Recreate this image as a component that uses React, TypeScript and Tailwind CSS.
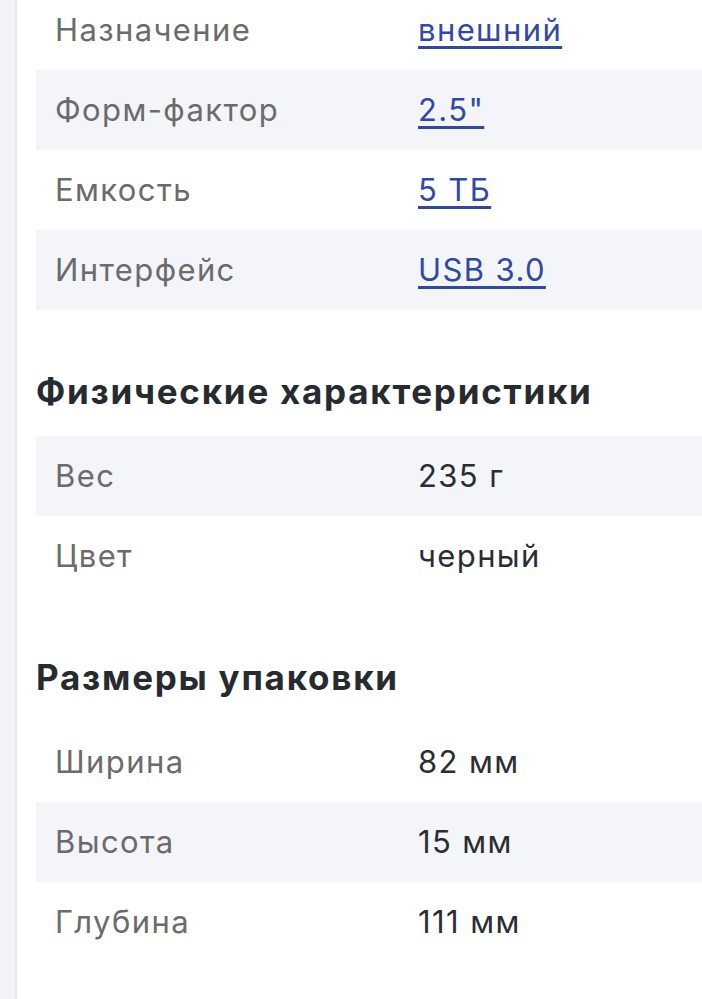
import React from "react";

type Row = { label: string; value: string; link?: boolean };

const general: Row[] = [
  { label: "Назначение", value: "внешний", link: true },
  { label: "Форм-фактор", value: "2.5\"", link: true },
  { label: "Емкость", value: "5 ТБ", link: true },
  { label: "Интерфейс", value: "USB 3.0", link: true },
];

const physical: Row[] = [
  { label: "Вес", value: "235 г" },
  { label: "Цвет", value: "черный" },
];

const pack: Row[] = [
  { label: "Ширина", value: "82 мм" },
  { label: "Высота", value: "15 мм" },
  { label: "Глубина", value: "111 мм" },
];

const SpecTable = ({ rows, firstGray }: { rows: Row[]; firstGray: boolean }) => (
  <div className="flex flex-col">
    {rows.map((r, i) => {
      const gray = firstGray ? i % 2 === 0 : i % 2 === 1;
      return (
        <div
          key={r.label}
          className={`flex h-[80px] items-center pl-[19px] text-[31px] tracking-[0.045em] ${gray ? "bg-[#f3f5f9]" : "bg-white"}`}
        >
          <div className="w-[363px] shrink-0 text-[#6b6b6b]">{r.label}</div>
          {r.link ? (
            <a href="#" className="text-[#3148a9] underline decoration-[2.5px] underline-offset-[5px]">
              {r.value}
            </a>
          ) : (
            <div className="text-[#2a2e33]">{r.value}</div>
          )}
        </div>
      );
    })}
  </div>
);

const Heading = ({ children }: { children: React.ReactNode }) => (
  <h2 className="mt-[61px] mb-[25px] h-[40px] text-[35px] leading-[40px] font-bold tracking-[0.05em] text-[#262b30]">
    {children}
  </h2>
);

export default function App() {
  return (
    <div
      className="flex h-[999px] w-[702px] overflow-hidden bg-white"
      style={{ fontFamily: "Inter, 'Noto Sans', sans-serif" }}
    >
      <div className="w-[17px] shrink-0 border-r-2 border-[#e8e9f0] bg-[#f3f4f8]" />
      <div className="flex-1 pl-[19px]">
        <div className="-mt-[10px]">
          <SpecTable rows={general} firstGray={false} />
        </div>
        <Heading>Физические характеристики</Heading>
        <SpecTable rows={physical} firstGray={true} />
        <Heading>Размеры упаковки</Heading>
        <SpecTable rows={pack} firstGray={false} />
      </div>
    </div>
  );
}
